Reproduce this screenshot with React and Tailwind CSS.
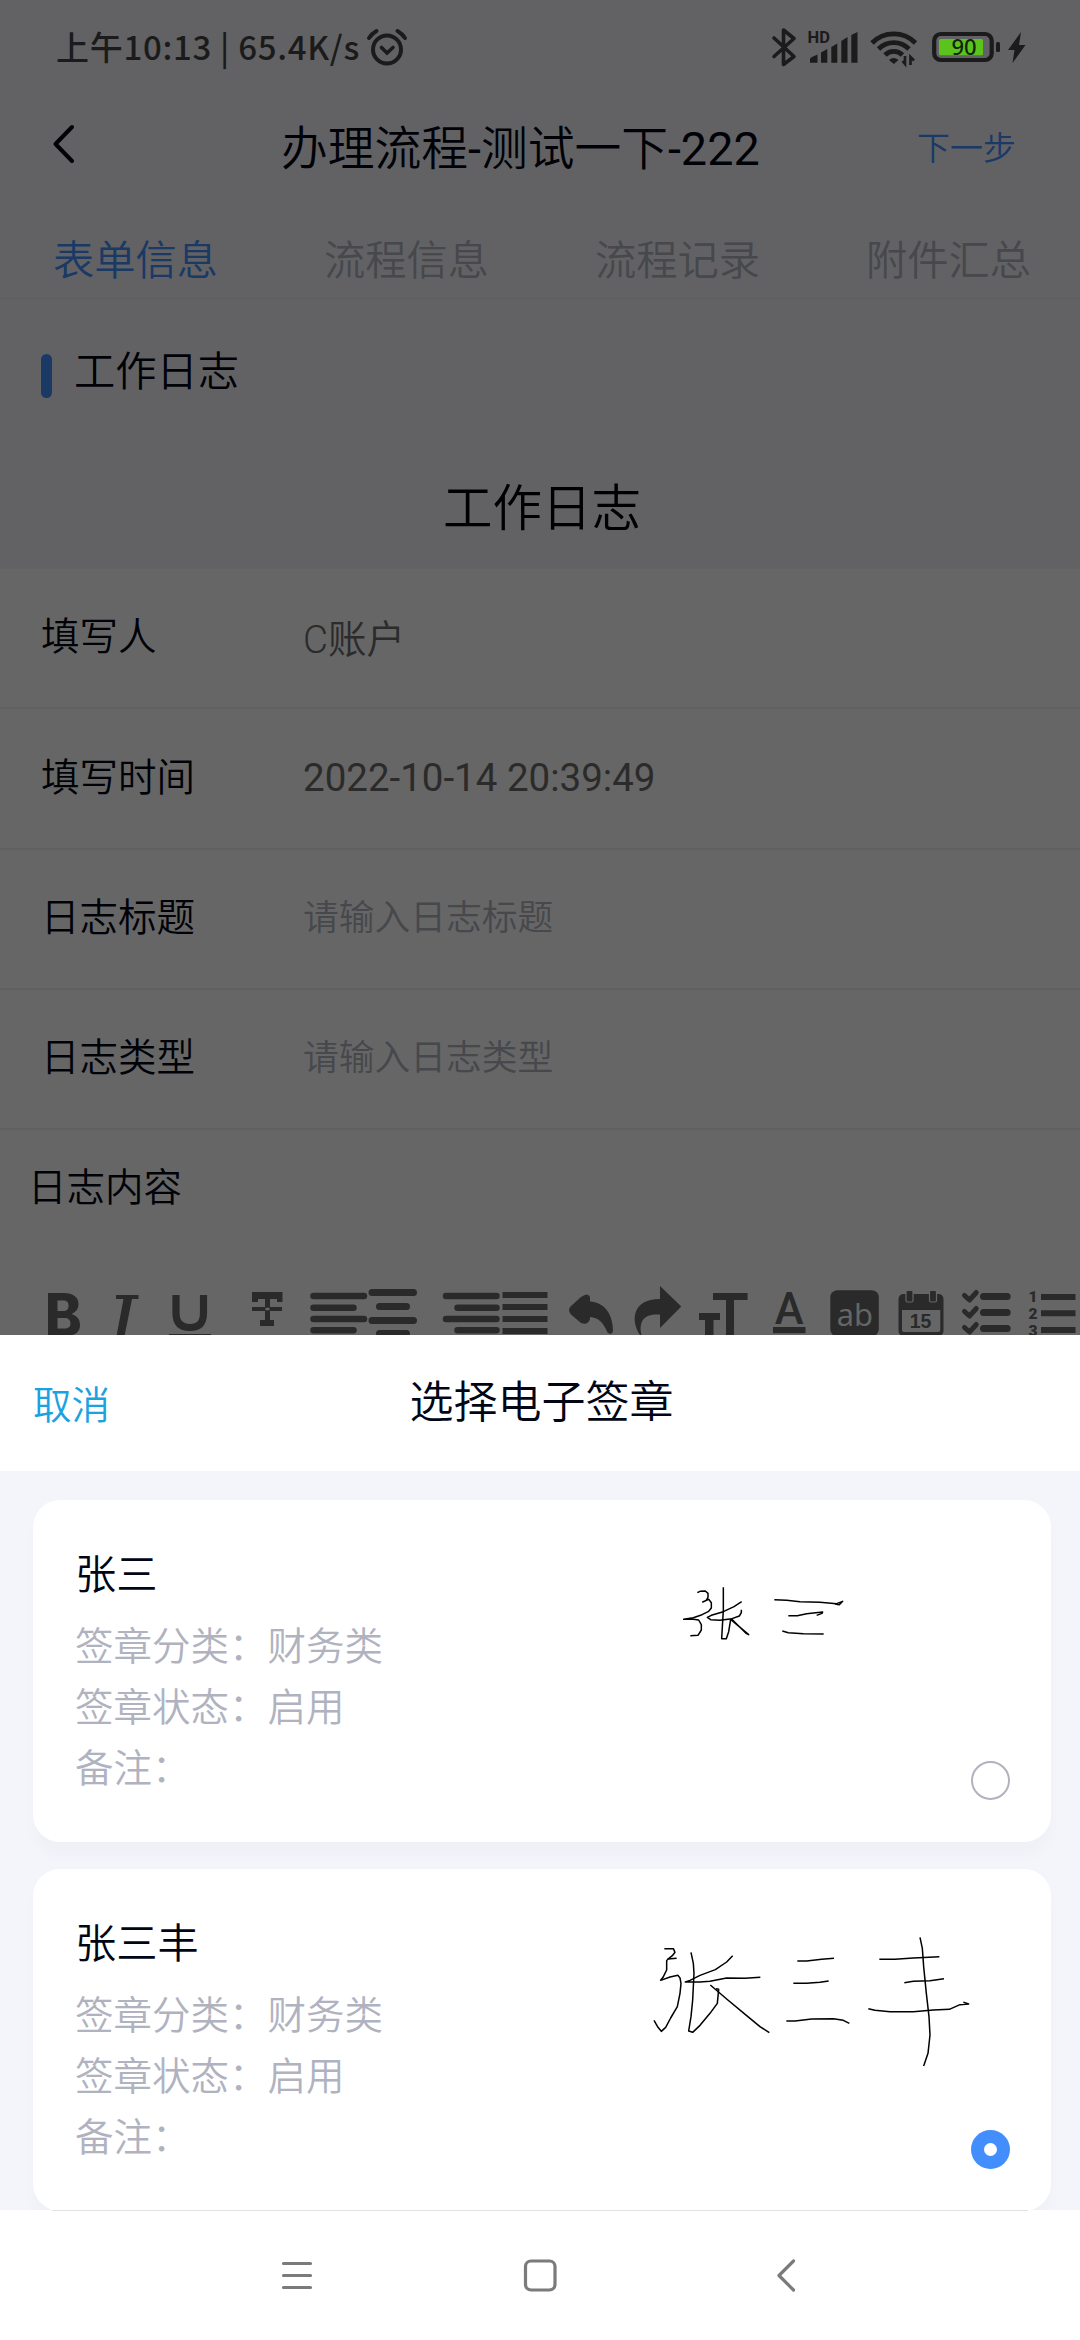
import React, { useState } from "react";

const tabs = ["表单信息", "流程信息", "流程记录", "附件汇总"];

const fields = [
  { label: "填写人", value: "C账户" },
  { label: "填写时间", value: "2022-10-14 20:39:49" },
  { label: "日志标题", placeholder: "请输入日志标题" },
  { label: "日志类型", placeholder: "请输入日志类型" },
];

const seals = [
  {
    id: 1,
    name: "张三",
    category: "财务类",
    status: "启用",
    remark: "",
    viewBox: "-30 -27 1020 510",
    strokes: [
      "M172 98L180 94L196 93L204 100L204 112L198 122L188 126L206 118L214 128L214 144L206 154L186 164L160 173L131 178L160 178L176 180L184 194L184 210L174 226L151 227",
      "M250 82V150L245 236H259L266 215L272 178L326 224L318 220L274 176",
      "M305 125L282 140L250 155L214 166L202 172L212 179L240 181L276 176L298 168L304 158V149",
      "M403 119L440 121L480 125L540 127L590 131L608 124L598 134L584 132",
      "M445 167L472 167L500 161L548 156L546 160L530 166",
      "M427 213L445 218L490 221L551 222",
    ],
  },
  {
    id: 2,
    name: "张三丰",
    category: "财务类",
    status: "启用",
    remark: "",
    viewBox: "0 0 1020 510",
    strokes: [
      "M103 86H130L135 97L127 107L113 118L110 122V150L99 172L92 181L120 171L144 166L150 174L153 190L150 220L142 260L122 294L107 322L94 334L84 322L72 301",
      "M113 117L140 115",
      "M183 97L190 130L192 160L188 240L183 290L176 333L188 337L210 316L240 280L262 250L266 208L258 206",
      "M308 107L290 126L256 149L210 166L180 181L166 186H210L240 184L290 174L345 175L391 172",
      "M241 195L290 237L350 287L390 320L418 338",
      "M502 123H530L575 118L612 115",
      "M490 190L530 190L570 187L596 183",
      "M469 303H495L545 297L610 296L640 301L658 310",
      "M748 118H795L850 114L928 110",
      "M823 188L850 184L900 182L942 176",
      "M870 52L877 85L881 140L889 220L897 290L900 345L894 400L881 438",
      "M715 266L735 271L780 275L850 275L910 270L958 268L990 254L1016 252L1000 247",
    ],
  },
];

const AlarmIcon = () => (
  <svg className="h-[40px] w-[42px]" viewBox="0 0 42 40" fill="none" stroke="#1b1b1b" strokeLinecap="round">
    <circle cx="21" cy="22.5" r="14" strokeWidth="4" />
    <path d="M15.5 20.5L21 26L27 20.5" strokeWidth="3.6" />
    <path d="M3 11Q6 6.500 10.500 4M39 11Q36 6.500 31.500 4" strokeWidth="4" />
  </svg>
);

const BluetoothIcon = () => (
  <svg className="h-[42px] w-[28px]" viewBox="0 0 28 42" fill="none" stroke="#1b1b1b" strokeWidth="3.6" strokeLinecap="round" strokeLinejoin="round">
    <path d="M4 12L24 30.500L13.500 38.500V4L24 12.500L4 30.500" />
  </svg>
);

const SignalIcon = () => (
  <svg className="h-[42px] w-[52px]" viewBox="806 26 52 42" fill="#1b1b1b">
    <text x="806.500" y="43" fontSize="16.500" fontWeight="700" fontFamily="Roboto, sans-serif">
      HD
    </text>
    <path d="M809 59Q809 58 811 57L816.500 54.500V62.700H809ZM820 52.500L826.300 49V62.700H820ZM830.300 47L836.300 43.500V62.700H830.300ZM840.300 41L846.500 37V62.700H840.300ZM850.300 35L856.500 32V62.700H850.300Z" />
  </svg>
);

const WifiIcon = () => (
  <svg className="h-[42px] w-[50px]" viewBox="868 26 50 42" fill="none" stroke="#1b1b1b" strokeWidth="4.800">
    <path d="M871 43A30.500 30.500 0 0 1 914.500 43" />
    <path d="M877.500 49A21.500 21.500 0 0 1 908 49" />
    <path d="M884 55A12.500 12.500 0 0 1 901.500 55" />
    <path d="M888 60Q892.500 56 897.500 60L892.800 64Z" fill="#1b1b1b" stroke="none" />
    <path d="M904 56V64L901.500 61M909.500 65V57L913 60.500" strokeWidth="2.600" />
  </svg>
);

const BatteryIcon = () => (
  <svg className="h-[42px] w-[98px]" viewBox="929 26 98 42">
    <rect x="933.200" y="34" width="57.500" height="26" rx="6.500" fill="none" stroke="#1b1b1b" strokeWidth="4.200" />
    <rect x="938" y="39" width="44" height="16.300" rx="1.500" fill="#5bc41c" />
    <rect x="995" y="42" width="4" height="10" rx="1.500" fill="#1b1b1b" />
    <text x="963" y="55" textAnchor="middle" fontSize="22" fontWeight="500" fontFamily="'Noto Sans', sans-serif" fill="#14240c">
      90
    </text>
    <path d="M1020 32L1007 50H1013.500L1011.500 63L1024.500 45H1018Z" fill="#1b1b1b" />
  </svg>
);

// Every icon is cut out of one long strip, x is where it starts on the strip
const toolbarIcons = [
  {
    x: 30,
    w: 66,
    art: (
      <path
        fillRule="evenodd"
        d="M48 13H64C73 13 78.500 17 78.500 24C78.500 29 76 32 71.500 34C77 36 80 39 80 45C80 52 75 56 66 56H48ZM57.500 20.500V31H63C67 31 68.500 29 68.500 26C68.500 22 67 20.500 63 20.500ZM57.500 38V48.500H64C68.500 48.500 70.500 47 70.500 43.500C70.500 40 68.500 38 64 38Z"
      />
    ),
  },
  { x: 96, w: 66, art: <path d="M116 15H138.500V19H132L124.500 56H116.500L123.500 19H116Z" /> },
  {
    x: 162,
    w: 66,
    art: (
      <>
        <path d="M176 15V33C176 43 181 47.500 190 47.500C199 47.500 203.500 43 203.500 33V15" fill="none" stroke="currentColor" strokeWidth="7.200" />
        <rect x="169" y="54" width="42" height="6" />
      </>
    ),
  },
  {
    x: 228,
    w: 72,
    art: (
      <path
        fillRule="evenodd"
        d="M252 12H282.500V22H277V19H270V27H282V31H270V40H274V46H260V40H265V31H252V27H265V19H258V22H252ZM265.500 27.700V30.300H269.500V27.700Z"
      />
    ),
  },
  {
    x: 300,
    w: 68,
    art: <path d="M313.500 16H364M313.500 27.700H353.500M313.500 39H364M313.500 50.200H353.500" stroke="currentColor" strokeWidth="6.500" strokeLinecap="round" />,
  },
  {
    x: 368,
    w: 66,
    art: <path d="M372 12.500H413.500M379.500 26.500H406.500M372 40.500H413.500M379.500 53.500H406.500" stroke="currentColor" strokeWidth="7" strokeLinecap="round" />,
  },
  {
    x: 434,
    w: 67,
    art: <path d="M446 16H496.500M457.500 27.700H496.500M446 39H496.500M457.500 50.200H496.500" stroke="currentColor" strokeWidth="6.500" strokeLinecap="round" />,
  },
  { x: 501, w: 58, art: <path d="M502.500 15H547.500M502.500 27H547.500M502.500 39H547.500M502.500 51H547.500" stroke="currentColor" strokeWidth="6" /> },
  {
    x: 559,
    w: 66,
    art: <path d="M571 26L581 17Q588 12 590 17V21.500C604 22 613 34 613 51Q612 56 607.500 52.500C603 42 598 37.500 590 37V39Q588 45.500 581 43L571 34.500Q567 30 571 26Z" />,
  },
  { x: 625, w: 66, art: <path d="M660 6L681.300 26.500L660 48V34.500C644 33.500 638.500 41 641.500 55H640C631 42 631 19 660 19Z" /> },
  { x: 691, w: 66, art: <path d="M713 13H747.600V20H734V60H726V20H713ZM699 33H720V40H713.500V60H705V40H699Z" /> },
  {
    x: 757,
    w: 66,
    art: (
      <>
        <text x="789.300" y="43.500" textAnchor="middle" fontSize="43.500" fontWeight="500" fontFamily="Roboto, sans-serif">
          A
        </text>
        <rect x="773" y="47" width="32.500" height="6.200" />
      </>
    ),
  },
  {
    x: 823,
    w: 66,
    art: (
      <>
        <rect x="830.300" y="10.200" width="48.500" height="46" rx="7" />
        <text x="854.800" y="45.500" textAnchor="middle" fontSize="31" fontWeight="400" fontFamily="'Open Sans', sans-serif" fill="#ffffff">
          ab
        </text>
      </>
    ),
  },
  {
    x: 889,
    w: 66,
    art: (
      <>
        <rect x="898.500" y="14" width="45" height="42" rx="5" />
        <path d="M902 30H940.300V50Q940.300 52 938 52H904Q902 52 902 50Z" fill="#ffffff" />
        <rect x="906" y="10.500" width="7" height="11.500" rx="1.500" stroke="#ffffff" strokeWidth="1.200" />
        <rect x="929.500" y="10.500" width="7" height="11.500" rx="1.500" stroke="#ffffff" strokeWidth="1.200" />
        <text x="920.500" y="48.300" textAnchor="middle" fontSize="19.500" fontWeight="700" fontFamily="'Liberation Sans', sans-serif">
          15
        </text>
      </>
    ),
  },
  {
    x: 955,
    w: 66,
    art: (
      <>
        <path d="M964.500 15.500L969.500 20L976.300 12.500M964.500 31.500L969.500 36L976.300 28.500M964.500 47.500L969.500 52L976.300 44.500" fill="none" stroke="currentColor" strokeWidth="5" strokeLinecap="round" strokeLinejoin="round" />
        <path d="M983.500 16.500H1007.200M983.500 32.500H1007.200M983.500 48.500H1007.200" stroke="currentColor" strokeWidth="7" strokeLinecap="round" />
      </>
    ),
  },
  {
    x: 1021,
    w: 59,
    art: (
      <>
        <g fontSize="15.500" fontWeight="900" fontFamily="Roboto, sans-serif" textAnchor="middle">
          <text x="1033" y="22">1</text>
          <text x="1033" y="38.500">2</text>
          <text x="1033" y="56">3</text>
        </g>
        <path d="M1041 17H1075.500M1041 33.200H1075.500M1041 50H1075.500" stroke="currentColor" strokeWidth="6" />
      </>
    ),
  },
];

const StatusBar = () => (
  <div className="flex h-[94px] items-center pl-[56px] pr-[52px]">
    <span className="-mt-[2px] text-[33px] font-medium leading-[40px] tracking-[0.7px] text-[#1b1b1b] font-['Noto_Sans_CJK_SC',sans-serif]">
      上午10:13 | 65.4K/s
    </span>
    <div className="ml-[6px]">
      <AlarmIcon />
    </div>
    <div className="ml-auto flex items-center">
      <BluetoothIcon />
      <div className="ml-[9px]">
        <SignalIcon />
      </div>
      <div className="ml-[10px]">
        <WifiIcon />
      </div>
      <div className="ml-[11px]">
        <BatteryIcon />
      </div>
    </div>
  </div>
);

const FormPage = () => (
  <div className="h-[2340px] bg-[#f5f5fa]">
    <div className="h-[94px]" />

    {/* Title bar */}
    <div className="flex h-[106px] items-center pl-[48px] pr-[64px]">
      <svg className="-mt-[6px] h-[40px] w-[30px]" viewBox="0 0 30 40" fill="none" stroke="#010616" strokeWidth="4" strokeLinecap="round" strokeLinejoin="round">
        <path d="M24 3L7.500 20L24 37" />
      </svg>
      <h1 className="ml-[203px] pt-[3px] text-[46.750px] leading-[60px] text-[#010616]">
        办理流程<span className="font-normal">-</span>测试一下<span className="font-normal">-222</span>
      </h1>
      <button className="ml-auto pt-[3px] text-[33px] leading-[40px] text-[#428efd]">下一步</button>
    </div>

    {/* Tabs */}
    <div className="flex h-[99px] border-b border-[#ece8ea] pt-[31px] pl-[53px] text-[41.250px] leading-[60px]">
      {tabs.map((tab, i) => (
        <div key={tab} className={`w-[271px] shrink-0 ${i === 0 ? "text-[#428efd]" : "text-[#b0b3bf]"}`}>
          {tab}
        </div>
      ))}
    </div>

    <div className="flex h-[143px] items-center pl-[41px]">
      <div className="mt-[11px] h-[44px] w-[11px] rounded-full bg-[#428efd]" />
      <h2 className="ml-[22px] pt-[2px] text-[41.250px] leading-[60px] text-[#010616]">工作日志</h2>
    </div>
    <div className="flex h-[127px] items-center justify-center pt-[7px] pl-[4px] text-[49.500px] text-black">工作日志</div>

    {/* Form */}
    <div className="bg-white">
      {fields.map((field) => (
        <div key={field.label} className="flex h-[140.250px] items-center border-b-2 border-[#f0f0f2] pl-[41px]">
          <div className="w-[262px] pb-[2px] text-[38.500px] text-[#010616]">{field.label}</div>
          {field.value ? (
            <div className={`text-[38.500px] text-[#6c6c6c] ${field.label === "填写人" ? "pt-[3px]" : "pb-[2px] font-normal"}`}>
              {field.value}
            </div>
          ) : (
            <div className="text-[35.750px] text-[#b0b3bf]">{field.placeholder}</div>
          )}
        </div>
      ))}
      <div className="flex h-[150px] items-center pl-[28px] pb-[34px] text-[38.500px] text-[#010616]">日志内容</div>
      <div className="flex pl-[30px] text-[#696969]">
        {toolbarIcons.map((icon) => (
          <svg key={icon.x} width={icon.w} height="60" viewBox={`${icon.x} 0 ${icon.w} 60`} className="shrink-0" fill="currentColor">
            {icon.art}
          </svg>
        ))}
      </div>
      <div className="h-[900px]" />
    </div>
  </div>
);

const Radio = ({ checked }) =>
  checked ? (
    <span className="flex h-[39px] w-[39px] items-center justify-center rounded-full bg-[#428efd]">
      <span className="h-[13px] w-[13px] rounded-full bg-white" />
    </span>
  ) : (
    <span className="block h-[39px] w-[39px] rounded-full border-2 border-[#b0b3bf]" />
  );

const SealCard = ({ seal, checked, onSelect }) => (
  <div
    onClick={onSelect}
    className="flex h-[342px] rounded-[27px] bg-white pl-[42px] pr-[41px] shadow-[0_14px_14px_rgba(0,0,0,0.02)]"
  >
    <div className="w-[555px] pt-[45px]">
      <h3 className="text-[41.250px] leading-[60px] text-[#010616]">{seal.name}</h3>
      <div className="mt-[11px] text-[38.500px] leading-[61px] text-[#b0b3bf]">
        <p>签章分类：{seal.category}</p>
        <p>签章状态：{seal.status}</p>
        <p>备注：{seal.remark}</p>
      </div>
    </div>
    <svg className="mt-[51px] h-[170px] w-[340px] overflow-visible" viewBox={seal.viewBox} fill="none" stroke="#000000" strokeWidth="4.500" strokeLinejoin="round">
      {seal.strokes.map((d) => (
        <path key={d} d={d} />
      ))}
    </svg>
    <div className="mt-auto mb-[42px] ml-[1px]">
      <Radio checked={checked} />
    </div>
  </div>
);

const SealSheet = () => {
  const [selected, setSelected] = useState(2);

  return (
    <div className="h-[875px] bg-[#f4f5fa]">
      <div className="grid h-[136px] grid-cols-3 items-center bg-white">
        <button className="pt-[5px] pl-[33px] text-left text-[38.500px] text-[#1ba2e1]">取消</button>
        <div className="pl-[3px] text-center text-[44px] text-[#010616]">选择电子签章</div>
      </div>
      <div className="flex flex-col gap-[27px] pt-[29px] pl-[33px] pr-[29px]">
        {seals.map((seal) => (
          <SealCard key={seal.id} seal={seal} checked={seal.id === selected} onSelect={() => setSelected(seal.id)} />
        ))}
      </div>
    </div>
  );
};

const NavBar = () => (
  <div className="relative h-[130px] bg-white">
    <div className="mx-[52px] h-px bg-[#e2e2e2]" />
    <div className="flex h-[129px] items-center justify-between pl-[277px] pr-[273px]">
      <svg className="h-[40px] w-[40px]" viewBox="0 0 40 40" stroke="#7b7b7b" strokeWidth="3.200" strokeLinecap="round">
        <path d="M6.500 7.500H33.500M6.500 19.500H33.500M6.500 31.500H33.500" />
      </svg>
      <svg className="h-[40px] w-[40px]" viewBox="0 0 40 40" fill="none" stroke="#7b7b7b" strokeWidth="3.200">
        <rect x="3.500" y="5" width="29.500" height="29" rx="5.500" />
      </svg>
      <svg className="h-[40px] w-[40px]" viewBox="0 0 40 40" fill="none" stroke="#7b7b7b" strokeWidth="3.200" strokeLinecap="round" strokeLinejoin="round">
        <path d="M26.500 5L12 19.500L26.500 34" />
      </svg>
    </div>
  </div>
);

const App = () => {
  return (
    <div className="relative h-[2340px] w-[1080px] overflow-hidden font-[350] font-['Roboto','Noto_Sans_CJK_SC',sans-serif]">
      <FormPage />
      {/* Mask and bottom sheet */}
      <div className="absolute inset-0 flex flex-col bg-black/60">
        <StatusBar />
        <div className="mt-auto">
          <SealSheet />
          <NavBar />
        </div>
      </div>
    </div>
  );
};

export default App;
